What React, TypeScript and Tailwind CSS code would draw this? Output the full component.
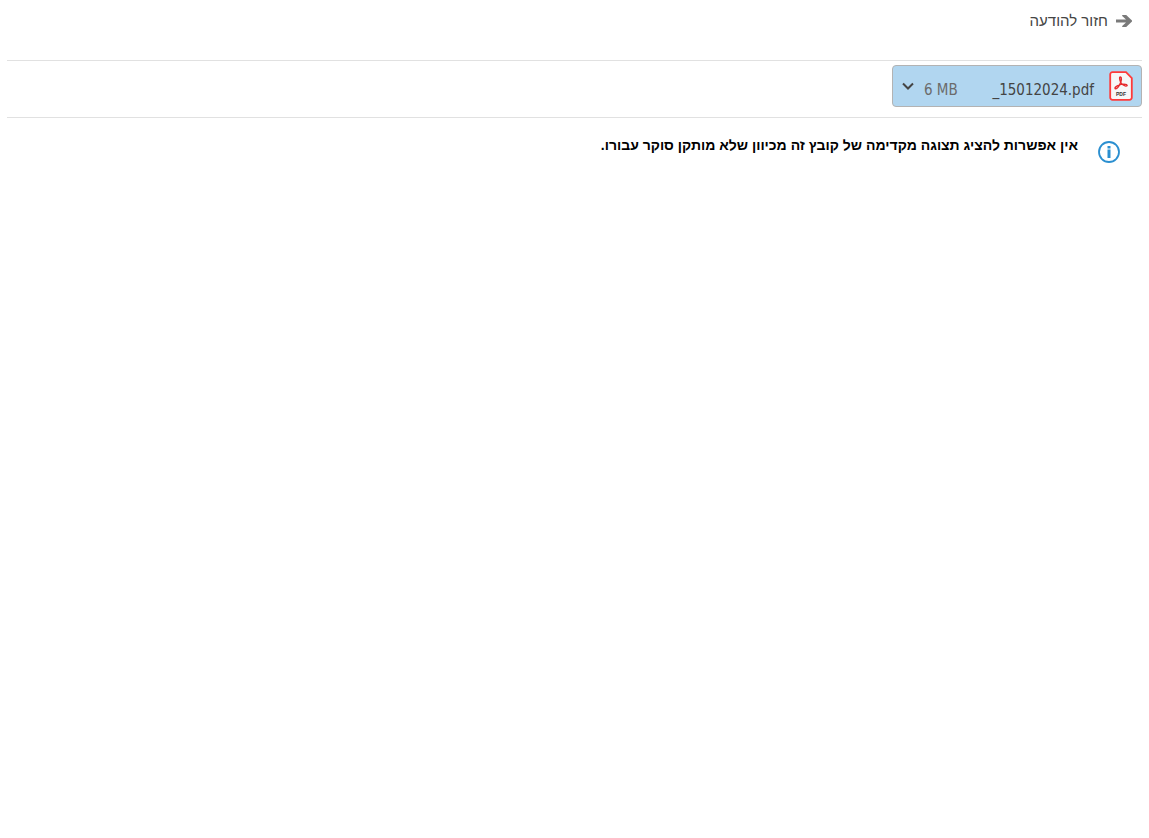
function ArrowIcon() {
  return (
    <svg width="16" height="12" viewBox="0 0 16 12" fill="#7a7a7a" aria-hidden="true">
      <path d="M0 4.500h10L6.200 1V0h4L16 5.500v1L10.200 12h-4v-1L10 7.500H0Z" />
    </svg>
  );
}

function PdfIcon() {
  return (
    <svg width="24" height="30" viewBox="0 0 24 30" fill="none" aria-hidden="true">
      <path
        d="M3.500 1.200H17L22.800 7V26.500a2.300 2.300 0 0 1-2.300 2.300h-17a2.300 2.300 0 0 1-2.300-2.300v-23a2.300 2.300 0 0 1 2.300-2.300Z"
        fill="#f7f7f7"
        stroke="#ff3a3a"
        strokeWidth="1.800"
      />
      <path
        d="M11.300 6c1.800.2 1.100 3.700.1 6.100-1.100 2.600-2.900 5.600-4.700 5.700-1.600-.2-.3-2.200 2-3.200 2.700-1.100 7.200-1.800 8.900-.9 1.200.9.200 1.700-1.400 1.200-2.200-.8-4.700-3.300-5.200-5.500-.4-1.700-.7-3.400.3-3.400Z"
        stroke="#e62a2c"
        strokeWidth="1.400"
      />
      <text
        x="12"
        y="25"
        textAnchor="middle"
        fill="#333333"
        className="font-['Liberation_Sans',sans-serif] text-[5px] font-bold"
      >
        PDF
      </text>
    </svg>
  );
}

function ChevronIcon() {
  return (
    <svg width="12" height="10" viewBox="0 0 12 10" fill="none" aria-hidden="true">
      <path d="m1 2.500 5 5 5-5" stroke="#444444" strokeWidth="2" />
    </svg>
  );
}

function InfoIcon() {
  return (
    <svg width="22" height="22" viewBox="0 0 22 22" fill="none" className="shrink-0" aria-hidden="true">
      <circle cx="11" cy="11" r="10" stroke="#2b8fd0" strokeWidth="1.800" />
      <path d="M11 5v2.500M11 8.500V17" stroke="#2b8fd0" strokeWidth="3" />
    </svg>
  );
}

export default function App() {
  return (
    <div
      dir="rtl"
      lang="he"
      className="min-h-screen bg-white px-[7px] font-['Liberation_Sans','Open_Sans',sans-serif]"
    >
      <header className="flex h-[60px] items-start px-[10px] pt-[11px]">
        <a href="#message" className="flex items-center gap-2 text-[15px] leading-5 text-[#444444]">
          <ArrowIcon />
          חזור להודעה
        </a>
      </header>

      <div className="border-y border-[#e1e1e1] pt-1 pb-[10px]">
        <button
          type="button"
          className="flex h-[42px] w-[250px] items-center rounded border border-[#b3b3b3] bg-[#b1d6f0] pr-2 pl-[9px] font-['DejaVu_Sans_Condensed','DejaVu_Sans',sans-serif] text-[15px] leading-5"
        >
          <PdfIcon />
          <span dir="ltr" className="mr-[15px] pt-2 text-[#444444]">
            _15012024.pdf
          </span>
          <span dir="ltr" className="mr-auto ml-[10px] pt-2 text-[#6b6b6b]">
            6 MB
          </span>
          <ChevronIcon />
        </button>
      </div>

      <main className="flex items-start gap-5 px-[22px] pt-[23px]">
        <InfoIcon />
        <p className="-mt-1.5 text-sm leading-5 font-bold text-black">
          אין אפשרות להציג תצוגה מקדימה של קובץ זה מכיוון שלא מותקן סוקר עבורו.
        </p>
      </main>
    </div>
  );
}
